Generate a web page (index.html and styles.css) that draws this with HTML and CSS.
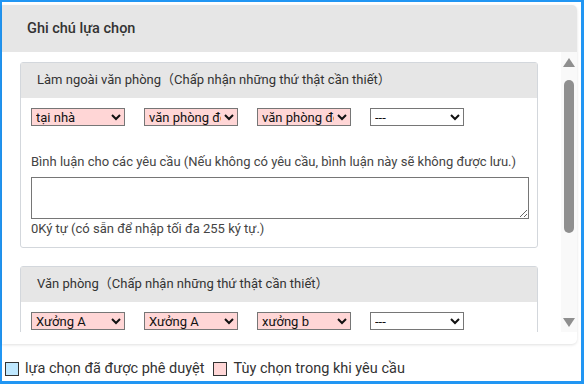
FILE: index.html
```html
<!DOCTYPE html>
<html lang="vi">
<head>
    <meta charset="UTF-8">
    <meta name="viewport" content="width=device-width, initial-scale=1.0">
    <title>Ghi chú lựa chọn</title>
    <link rel="stylesheet" href="styles.css">
</head>
<body>
    <div class="frame">
        <div class="panel">
            <div class="panel-header">Ghi chú lựa chọn</div>
            <div class="panel-body">
                <div class="scroll-content">
                    <div class="card">
                        <div class="card-header">Làm ngoài văn phòng（Chấp nhận những thứ thật cần thiết）</div>
                        <div class="card-body">
                            <div class="select-row">
                                <select class="choice requested"><option>tại nhà</option></select>
                                <select class="choice requested"><option>văn phòng đối tác</option></select>
                                <select class="choice requested"><option>văn phòng đối tác</option></select>
                                <select class="choice"><option>---</option></select>
                            </div>
                            <div class="comment-box">
                                <div class="comment-label">Bình luận cho các yêu cầu (Nếu không có yêu cầu, bình luận này sẽ không được lưu.)</div>
                                <textarea class="comment-input"></textarea>
                                <div class="comment-count">0Ký tự (có sẵn để nhập tối đa 255 ký tự.)</div>
                            </div>
                        </div>
                    </div>

                    <div class="card">
                        <div class="card-header">Văn phòng（Chấp nhận những thứ thật cần thiết）</div>
                        <div class="card-body">
                            <div class="select-row">
                                <select class="choice requested"><option>Xưởng A</option></select>
                                <select class="choice requested"><option>Xưởng A</option></select>
                                <select class="choice requested"><option>xưởng b</option></select>
                                <select class="choice"><option>---</option></select>
                            </div>
                        </div>
                    </div>
                </div>

                <!-- thanh cuộn -->
                <div class="scrollbar">
                    <div class="arrow-up"></div>
                    <div class="thumb"></div>
                    <div class="arrow-down"></div>
                </div>
            </div>
        </div>

        <div class="legend">
            <span class="legend-box approved"></span>
            <span class="legend-text">lựa chọn đã được phê duyệt</span>
            <span class="legend-box pending"></span>
            <span class="legend-text">Tùy chọn trong khi yêu cầu</span>
        </div>
    </div>
</body>
</html>
```

FILE: styles.css
```css
body, html {
    margin: 0;
    padding: 0;
    height: 100%;
    width: 100%;
    font-family: Roboto, "Liberation Sans", "Noto Sans CJK JP", sans-serif;
    background-color: #fff;
    overflow: hidden;
}

.frame {
    box-sizing: border-box;
    height: 384px;
    width: 584px;
    border: 2px solid #2196f3;
    border-right-width: 3px;
    border-bottom-width: 3px;
    display: flex;
    flex-direction: column;
}

/* panel */
.panel {
    margin: 3px 4px 0 0;
    background-color: #fff;
    border-radius: 0 5px 5px 0;
    box-shadow: 0 1px 3px rgba(0,0,0,0.12);
    overflow: hidden;
}

.panel-header {
    height: 47px;
    line-height: 47px;
    padding-left: 25px;
    background-color: #e6e6e6;
    font-size: 14.5px;
    font-weight: 500;
    color: #333;
}

.panel-body {
    display: flex;
    height: 280px;
    margin-bottom: 12px;
}

.scroll-content {
    flex-grow: 1;
    overflow: hidden;
    padding: 10px 23px 0 18px;
}

/* scrollbar */
.scrollbar {
    width: 16px;
    background-color: #f9f9f9;
    display: flex;
    flex-direction: column;
    align-items: center;
}

.arrow-up {
    margin-top: 6px;
    width: 0;
    height: 0;
    border-left: 6px solid transparent;
    border-right: 6px solid transparent;
    border-bottom: 9px solid #8f8f8f;
}

.thumb {
    margin-top: 13px;
    width: 10px;
    height: 153px;
    border-radius: 5px;
    background-color: #8f8f8f;
}

.arrow-down {
    margin-top: auto;
    margin-bottom: 5px;
    width: 0;
    height: 0;
    border-left: 6px solid transparent;
    border-right: 6px solid transparent;
    border-top: 9px solid #8f8f8f;
}

/* cards */
.card {
    border: 1px solid #d3d7dc;
    border-radius: 3px;
    margin-bottom: 18px;
    background-color: #fff;
}

.card-header {
    height: 35px;
    line-height: 34px;
    padding-left: 16px;
    background-color: #e6e6e6;
    font-size: 13px;
    color: #333;
}

.card-body {
    padding: 10px 9px 11px 10px;
}

.select-row {
    display: flex;
    gap: 19px;
}

.choice {
    width: 94px;
    height: 18px;
    padding: 0;
    border: 1px solid #767676;
    border-radius: 0;
    background-color: #fff;
    font-family: Roboto, "Liberation Sans", sans-serif;
    font-size: 13px;
    color: #111;
}

.choice.requested {
    background-color: #ffd6d6;
}

.comment-box {
    margin-top: 28px;
    font-size: 13px;
    color: #444;
}

.comment-label {
    margin-bottom: 8px;
}

.comment-input {
    display: block;
    box-sizing: border-box;
    width: 498px;
    height: 42px;
    margin: 0;
    border: 1px solid #767676;
    border-radius: 0;
    resize: vertical;
}

.comment-count {
    margin-top: 2px;
}

/* legend */
.legend {
    display: flex;
    align-items: center;
    padding: 16px 0 0 3px;
    font-size: 14.5px;
    color: #333;
}

.legend-box {
    width: 12px;
    height: 12px;
    border: 1px solid #333;
    margin-right: 6px;
}

.legend-box.approved {
    background-color: #bfe8ff;
}

.legend-box.pending {
    background-color: #ffd6d6;
    margin-left: 9px;
}
```
